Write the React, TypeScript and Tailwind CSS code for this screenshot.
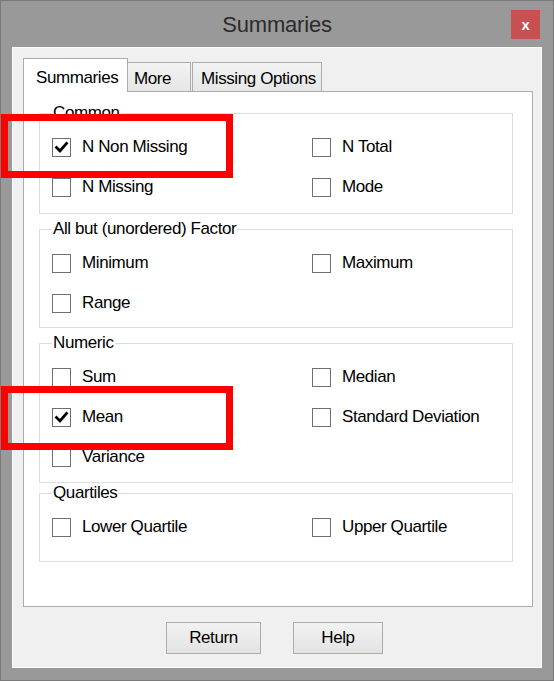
import React from "react";

function Check({ checked }: { checked?: boolean }) {
  return (
    <div className="w-[19px] h-[19px] border border-[#707070] bg-white flex items-center justify-center shrink-0">
      {checked && (
        <svg width="15" height="15" viewBox="0 0 15 15">
          <path d="M2.5 7.5 L6 11 L12.5 3.5" fill="none" stroke="#000" strokeWidth="2.8" strokeLinecap="square" />
        </svg>
      )}
    </div>
  );
}

function Item({ label, checked }: { label: string; checked?: boolean }) {
  return (
    <div className="flex items-center h-[40px]">
      <Check checked={checked} />
      <span className="ml-[11px]">{label}</span>
    </div>
  );
}

function Group({
  title,
  height,
  className,
  items,
}: {
  title: string;
  height: string;
  className?: string;
  items: { label: string; checked?: boolean }[];
}) {
  return (
    <fieldset className={`border border-[#dcdcdc] pl-[12px] w-[474px] ${height} ${className ?? ""}`}>
      <legend className="px-[1px] leading-[20px]">{title}</legend>
      <div className="grid grid-cols-[260px_1fr] pt-[4px]">
        {items.map((it) => (
          <Item key={it.label} label={it.label} checked={it.checked} />
        ))}
      </div>
    </fieldset>
  );
}

export default function App() {
  return (
    <div className="relative w-[554px] h-[681px] bg-[#999999] border border-[#7a7a7a] flex flex-col font-['Liberation_Sans',Arial,sans-serif] text-[17px] tracking-[-0.4px] text-black">
      {/* title bar */}
      <div className="h-[46px] grid grid-cols-[1fr_auto_1fr] items-center">
        <div />
        <div className="text-[22px] tracking-[-0.2px] text-[#2b2b2b] pt-[1px]">Summaries</div>
        <div className="flex justify-end pr-[13px] self-start pt-[9px]">
          <div className="w-[29px] h-[29px] bg-[#c75050] flex items-center justify-center text-white font-bold text-[15px] leading-none">
            x
          </div>
        </div>
      </div>

      {/* client */}
      <div className="ml-[11px] w-[530px] h-[621px] bg-[#f0f0f0] border border-[#fbfbfb] flex flex-col">
        {/* tabs */}
        <div className="ml-[10px] mt-[10px] h-[33px] flex items-end">
          <div className="relative z-10 -mb-px h-[34px] w-[105px] bg-white border border-b-0 border-[#acacac] pl-[12px] pt-[6px]">
            Summaries
          </div>
          <div className="h-[29px] w-[63px] border border-b-0 border-l-0 border-[#acacac] bg-gradient-to-b from-[#f3f3f3] to-[#e6e6e6] pl-[6px] pt-[3px]">
            More
          </div>
          <div className="ml-[1px] h-[29px] w-[130px] border border-b-0 border-[#acacac] bg-gradient-to-b from-[#f3f3f3] to-[#e6e6e6] pl-[8px] pt-[3px]">
            Missing Options
          </div>
        </div>
        <div className="ml-[10px] w-[510px] h-[516px] bg-white border border-[#acacac] pl-[15px] pt-[11px] flex flex-col">
          <Group
            title="Common"
            height="h-[111px]"
            items={[
              { label: "N Non Missing", checked: true },
              { label: "N Total" },
              { label: "N Missing" },
              { label: "Mode" },
            ]}
          />
          <Group
            title="All but (unordered) Factor"
            height="h-[109px]"
            className="mt-[5px]"
            items={[{ label: "Minimum" }, { label: "Maximum" }, { label: "Range" }]}
          />
          <Group
            title="Numeric"
            height="h-[150px]"
            className="mt-[5px]"
            items={[
              { label: "Sum" },
              { label: "Median" },
              { label: "Mean", checked: true },
              { label: "Standard Deviation" },
              { label: "Variance" },
            ]}
          />
          <Group
            title="Quartiles"
            height="h-[79px]"
            items={[{ label: "Lower Quartile" }, { label: "Upper Quartile" }]}
          />
        </div>
        {/* buttons */}
        <div className="mt-[15px] pl-[153px] flex gap-[32px]">
          <div className="w-[95px] h-[32px] border border-[#acacac] bg-gradient-to-b from-[#f2f2f2] to-[#e3e3e3] flex items-center justify-center">
            Return
          </div>
          <div className="w-[90px] h-[32px] border border-[#acacac] bg-gradient-to-b from-[#f2f2f2] to-[#e3e3e3] flex items-center justify-center">
            Help
          </div>
        </div>
      </div>

      {/* red highlight overlays */}
      <div className="absolute left-0 top-[113px] w-[232px] h-[64px] border-[7px] border-[#ff0000]" />
      <div className="absolute left-0 top-[385px] w-[232px] h-[64px] border-[7px] border-[#ff0000]" />
    </div>
  );
}
